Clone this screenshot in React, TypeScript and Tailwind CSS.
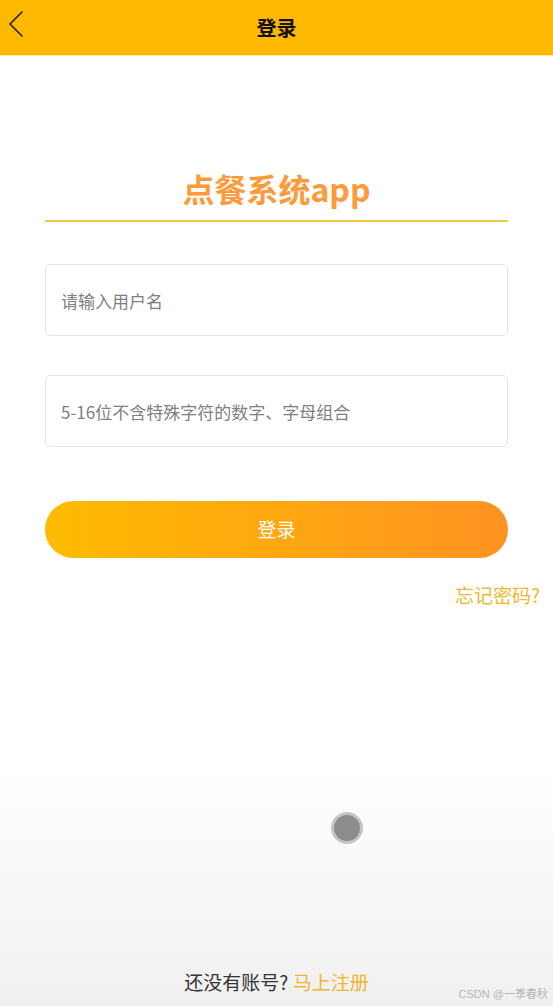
import React, { useState } from 'react';

const font = "font-['Noto_Sans_CJK_SC','Noto_Sans',sans-serif]";

const BackIcon = () => (
  <svg width="24" height="28" viewBox="0 0 24 28" fill="none">
    <path d="M19 2 L7 14 L19 26" stroke="#222" strokeWidth="1.6" strokeLinecap="round" strokeLinejoin="round" />
  </svg>
);

export default function App() {
  const [username, setUsername] = useState('');
  const [password, setPassword] = useState('');

  const inputClass =
    'w-full h-[72px] px-[15px] bg-white border border-[#e6e6e6] rounded-[5px] text-[17px] text-[#333] placeholder:text-[#808080] outline-none';

  return (
    <div
      className={`${font} relative flex flex-col w-full h-[1006px] bg-[linear-gradient(to_bottom,#ffffff_0%,#ffffff_76%,#f0f0f0_100%)]`}
    >
      {/* Header */}
      <div className="relative flex items-center justify-center h-[56px] bg-[#ffb900] border-b border-[#ffe9a6]">
        <button className="absolute left-[3px] top-[10px]">
          <BackIcon />
        </button>
        <h1 className="text-[20px] font-bold text-[#111] leading-none">登录</h1>
      </div>

      {/* Form */}
      <div className="px-[45px]">
        <div className="mt-[112px] pb-[12px] border-b-2 border-[#f7c948] text-center">
          <h2 className="text-[32px] leading-[40px] font-bold text-[#ff9a3a]">点餐系统app</h2>
        </div>

        <div className="mt-[42px]">
          <input
            type="text"
            value={username}
            onChange={e => setUsername(e.target.value)}
            placeholder="请输入用户名"
            className={inputClass}
          />
        </div>
        <div className="mt-[39px]">
          <input
            type="password"
            value={password}
            onChange={e => setPassword(e.target.value)}
            placeholder="5-16位不含特殊字符的数字、字母组合"
            className={inputClass}
          />
        </div>

        <button className="mt-[54px] w-full h-[57px] rounded-full bg-[linear-gradient(to_right,#ffbb00,#ff9322)] text-white text-[19px]">
          登录
        </button>
      </div>

      <div className="flex justify-end pr-[13px] mt-[24px]">
        <span className="text-[19px] leading-[26px] text-[#f5b731]">忘记密码?</span>
      </div>

      {/* floating touch indicator */}
      <div className="absolute left-[331px] top-[812px] w-[32px] h-[32px] rounded-full bg-[#8c8c8c] border-[3px] border-[#c4c4c4]" />

      <div className="mt-auto pb-[11px] text-center text-[19px] leading-[26px]">
        <span className="text-[#333]">还没有账号? </span>
        <span className="text-[#f2b631]">马上注册</span>
      </div>

      <div className="absolute right-[5px] bottom-[4px] text-[11px] text-[#b5b5b5] font-['Liberation_Sans','Noto_Sans_CJK_SC',sans-serif]">
        CSDN @一季春秋
      </div>
    </div>
  );
}
